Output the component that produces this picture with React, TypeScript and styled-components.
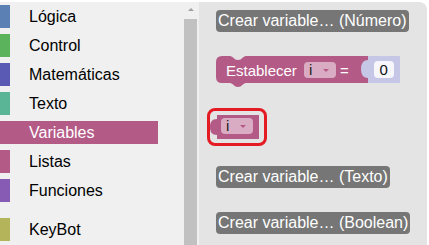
import React from "react";
import styled, { createGlobalStyle } from "styled-components";

const GlobalStyle = createGlobalStyle`
  html, body { margin: 0; padding: 0; background: #ffffff; }
  body { font-family: "Liberation Sans", Arial, sans-serif; }
`;

const Page = styled.div`
  display: flex;
  width: 429px;
  height: 245px;
  padding-top: 2px;
  box-sizing: border-box;
  overflow: hidden;
`;

const Toolbox = styled.div`
  display: flex;
  width: 199px;
  background: #f0f0f0;
  flex-shrink: 0;
`;

const CategoryList = styled.div`
  width: 184px;
  display: flex;
  flex-direction: column;
  padding-top: 3px;
`;

const Row = styled.div<{ $color: string; $selected?: boolean }>`
  display: flex;
  align-items: center;
  width: 158px;
  height: 23px;
  margin-bottom: 6px;
  background: ${(p) => (p.$selected ? p.$color : "transparent")};
  font-size: 16px;
  color: ${(p) => (p.$selected ? "#ffffff" : "#000000")};
  &::before {
    content: "";
    width: 10px;
    height: 23px;
    background: ${(p) => p.$color};
    margin-right: 19px;
  }
`;

const Separator = styled.div`
  width: 158px;
  height: 1px;
  background: #dcdcdc;
  margin: 2px 0 8px;
`;

const Scrollbar = styled.div`
  width: 13px;
  display: flex;
  flex-direction: column;
  align-items: center;
`;

const ScrollArrow = styled.div`
  width: 0;
  height: 0;
  border-left: 3px solid transparent;
  border-right: 3px solid transparent;
  border-bottom: 3px solid #a0a0a0;
  margin: 6px 0 8px;
`;

const Thumb = styled.div`
  width: 13px;
  flex: 1;
  background: #c1c1c1;
`;

const Flyout = styled.div`
  flex: 1;
  margin-right: 2px;
  background: #e4e4e4;
  border-top-right-radius: 8px;
  display: flex;
  flex-direction: column;
  align-items: flex-start;
  padding: 8px 0 0 17px;
`;

const FlyButton = styled.div<{ $top: number }>`
  margin-top: ${(p) => p.$top}px;
  height: 22px;
  padding: 0 2px;
  border-radius: 4px;
  background: #767676;
  color: #ffffff;
  font-size: 16px;
  line-height: 22px;
  white-space: nowrap;
`;

const BlockSvg = styled.svg<{ $top: number }>`
  display: block;
  margin-top: ${(p) => p.$top}px;
  overflow: visible;
`;

const Highlight = styled.div<{ $top: number }>`
  margin-top: ${(p) => p.$top}px;
  margin-left: -9px;
  width: 54px;
  height: 28px;
  border: 3px solid #e51b24;
  border-radius: 8px;
  display: flex;
  align-items: flex-start;
  padding-top: 4px;
  box-sizing: content-box;
`;

const PINK = "#b45a87";
const FIELD = "#d9acc3";

const categories = [
  { name: "Lógica", color: "#5a80b4" },
  { name: "Control", color: "#5bb45b" },
  { name: "Matemáticas", color: "#5a5ab4" },
  { name: "Texto", color: "#5ab496" },
  { name: "Variables", color: PINK, selected: true },
  { name: "Listas", color: PINK },
  { name: "Funciones", color: "#875ab4" },
];

const Dropdown = ({ x, y }: { x: number; y: number }) => (
  <g>
    <rect x={x} y={y} width={32} height={16} rx={4} fill={FIELD} />
    <text x={x + 5} y={y + 13} fontSize="15" fill="#1e1e1e" fontFamily="Liberation Sans, Arial, sans-serif">
      i
    </text>
    <polygon points={`${x + 19},${y + 7} ${x + 25},${y + 7} ${x + 22},${y + 10}`} fill={PINK} />
  </g>
);

const SetBlock = () => (
  <BlockSvg $top={24} width={186} height={32} viewBox="0 0 186 32">
    <path
      d="M0 6 Q0 0 6 0 H14 C17 0 18 4 22 4 C26 4 27 0 30 0 H157 V27 H30 C27 27 26 31 22 31 C18 31 17 27 14 27 H6 Q0 27 0 21 Z"
      fill={PINK}
    />
    <text x={10} y={19.5} fontSize="15" fill="#ffffff" fontFamily="Liberation Sans, Arial, sans-serif">
      Establecer
    </text>
    <Dropdown x={88} y={6} />
    <text x={124} y={19.5} fontSize="15" fill="#ffffff" fontFamily="Liberation Sans, Arial, sans-serif">
      =
    </text>
    <path d="M152 0 H184 V27 H152 V22 C147 22 145 18 145 13 C145 8 147 4 152 4 Z" fill="#c6c6e6" />
    <rect x={158} y={5} width={20} height={17} rx={4} fill="#f6f6fc" />
    <text x={163.5} y={19} fontSize="15" fill="#111111" fontFamily="Liberation Sans, Arial, sans-serif">
      0
    </text>
  </BlockSvg>
);

const GetBlock = () => (
  <BlockSvg $top={0} width={50} height={24} viewBox="0 0 50 24">
    <path d="M7 0 H49 V24 H7 V20 C2 20 0 17 0 12 C0 7 2 4 7 4 Z" fill={PINK} />
    <Dropdown x={11} y={3} />
  </BlockSvg>
);

export default function App() {
  return (
    <>
      <GlobalStyle />
      <Page>
        <Toolbox>
          <CategoryList>
            {categories.map((c) => (
              <Row key={c.name} $color={c.color} $selected={c.selected}>
                {c.name}
              </Row>
            ))}
            <Separator />
            <Row $color="#b4b45a">KeyBot</Row>
          </CategoryList>
          <Scrollbar>
            <ScrollArrow />
            <Thumb />
          </Scrollbar>
        </Toolbox>
        <Flyout>
          <FlyButton $top={0}>Crear variable… (Número)</FlyButton>
          <SetBlock />
          <Highlight $top={20}>
            <GetBlock />
          </Highlight>
          <FlyButton $top={20}>Crear variable… (Texto)</FlyButton>
          <FlyButton $top={24}>Crear variable… (Boolean)</FlyButton>
        </Flyout>
      </Page>
    </>
  );
}
